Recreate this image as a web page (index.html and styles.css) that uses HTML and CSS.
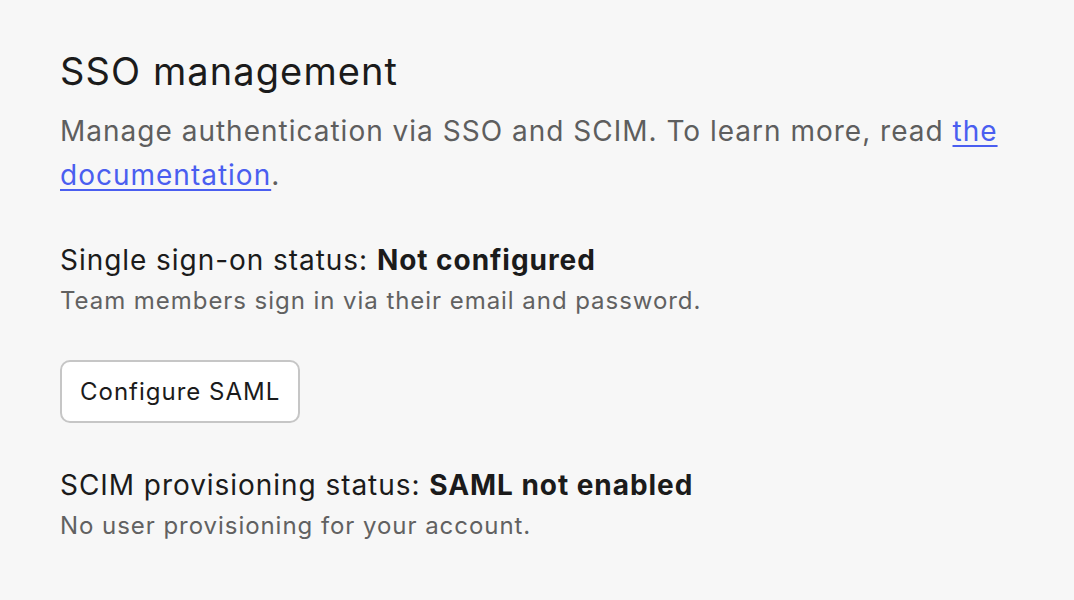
FILE: index.html
```html
<!DOCTYPE html>
<html lang="en">
<head>
<meta charset="utf-8">
<title>SSO management</title>
<link rel="stylesheet" href="styles.css">
</head>
<body>
<main class="panel">
  <h1 class="title">SSO management</h1>
  <p class="intro">Manage authentication via SSO and SCIM. To learn more, read <a class="link" href="#">the documentation</a>.</p>

  <section class="status">
    <p class="status-line">Single sign-on status: <strong>Not configured</strong></p>
    <p class="status-sub">Team members sign in via their email and password.</p>
  </section>

  <button class="btn" type="button">Configure SAML</button>

  <section class="status status-scim">
    <p class="status-line">SCIM provisioning status: <strong>SAML not enabled</strong></p>
    <p class="status-sub">No user provisioning for your account.</p>
  </section>
</main>
</body>
</html>
```

FILE: styles.css
```css
html, body {
  margin: 0;
  padding: 0;
  background: #f7f7f7;
}
body {
  font-family: Inter, "Noto Sans", sans-serif;
  color: #1b1b1b;
}
.panel {
  padding: 49px 60px 0 60px;
  display: flex;
  flex-direction: column;
  align-items: flex-start;
}
.title {
  margin: 0;
  font-size: 38px;
  line-height: 44px;
  font-weight: 400;
  letter-spacing: 1.1px;
  color: #1b1b1b;
}
.intro {
  margin: 16px 0 0 0;
  font-size: 28px;
  line-height: 44px;
  letter-spacing: 1px;
  color: #5e5e5e;
  max-width: 950px;
}
.link {
  color: #4a5ef0;
  text-decoration: underline;
  text-decoration-thickness: 2px;
  text-underline-offset: 4px;
}
.status {
  margin-top: 43px;
}
.status-line {
  margin: 0;
  font-size: 28px;
  line-height: 40px;
  letter-spacing: 0.95px;
  color: #1b1b1b;
}
.status-line strong {
  font-weight: 700;
}
.status-sub {
  margin: 3px 0 0 0;
  font-size: 24px;
  line-height: 36px;
  letter-spacing: 0.95px;
  color: #616161;
}
.btn {
  margin-top: 41px;
  height: 63px;
  padding: 0 18px;
  font-family: Inter, "Noto Sans", sans-serif;
  font-size: 24px;
  letter-spacing: 1px;
  color: #1b1b1b;
  background: #ffffff;
  border: 2px solid #c6c6c6;
  border-radius: 10px;
}
.status-scim {
  margin-top: 42px;
}
```
